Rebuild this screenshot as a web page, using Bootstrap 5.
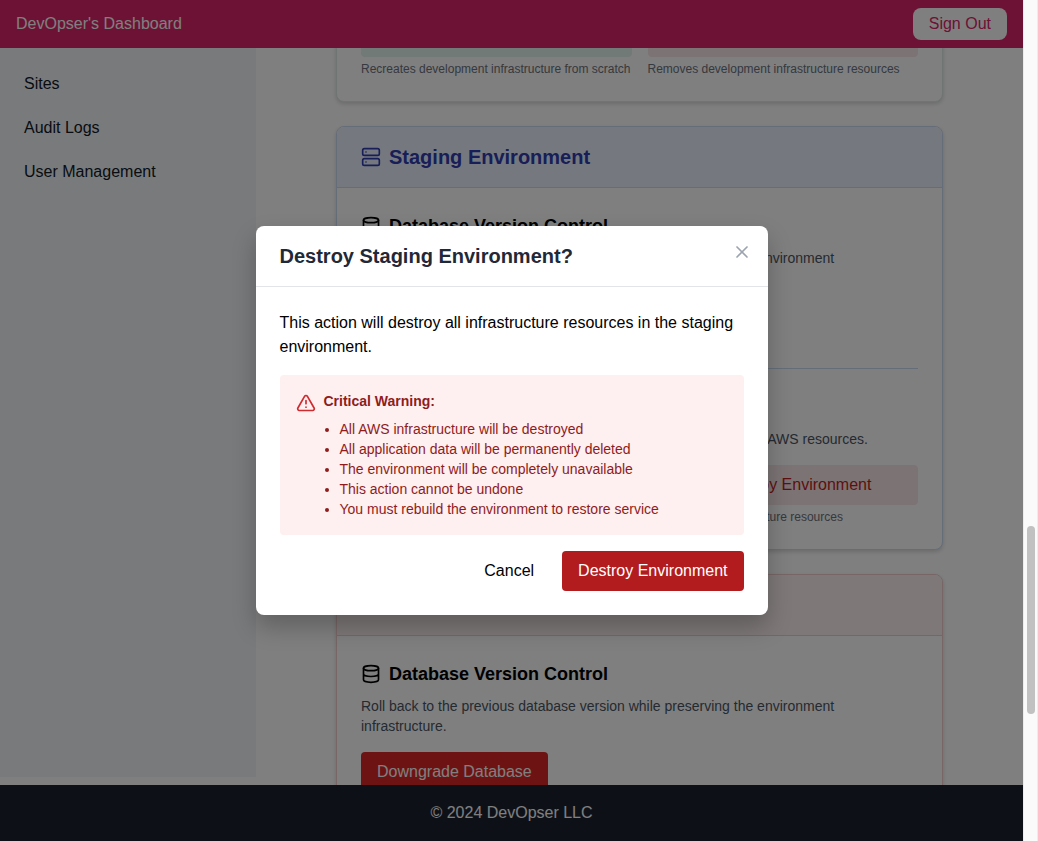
<!DOCTYPE html>
<html lang="en">
<head>
<meta charset="utf-8">
<meta name="viewport" content="width=device-width, initial-scale=1">
<title>DevOpser's Dashboard</title>
<link href="https://cdn.jsdelivr.net/npm/bootstrap@5.3.0/dist/css/bootstrap.min.css" rel="stylesheet">
<style>
  body { font-family: "Liberation Sans", Arial, sans-serif; font-size: 16px; line-height: 24px; color: #000; }
  svg { flex: none; fill: none; stroke: currentColor; stroke-width: 2; stroke-linecap: round; stroke-linejoin: round; }
  .topbar { background: #db2468; height: 48px; }
  .brand-link { color: #fff; text-decoration: none; }
  .btn { --bs-btn-color: #000; --bs-btn-padding-x: 16px; --bs-btn-padding-y: 8px; --bs-btn-border-width: 0; --bs-btn-border-radius: 4px; --bs-btn-line-height: 24px; }
  .btn-signout { --bs-btn-padding-y: 4px; --bs-btn-border-radius: 8px; background: #fff; color: #db2468; }
  .sidebar { width: 256px; background: #f3f5f8; padding: 16px 8px; margin-bottom: 8px; flex: none; }
  .sidebar .nav-link { color: #111827; padding: 8px 16px; }
  .content-area { padding: 0 80px; }
  .scrolled { margin-top: -56px; }
  .env { --edge: #cbdaf3; --tint: #ebf3ff; border: 1px solid var(--edge); border-radius: 8px; background: #fff; box-shadow: 0 2px 4px rgba(0,0,0,.16); margin-bottom: 24px; }
  .env-dev { --edge: #dcebe6; --tint: #f0fdf7; }
  .env-prod { --edge: #f0cccc; --tint: #fdf0f0; }
  .env-head { background: var(--tint); border-bottom: 1px solid var(--edge); border-radius: 7px 7px 0 0; padding: 16px 24px; }
  .env-title, .dialog-title { font-size: 20px; line-height: 28px; font-weight: 700; margin: 0; }
  .env-title { color: #303cae; }
  .env-prod .env-title { color: #9b1c1c; }
  .env-body { padding: 24px; }
  .section-title { font-size: 18px; line-height: 28px; font-weight: 700; margin: 0 0 8px; }
  .note { font-size: 14px; line-height: 20px; color: #4b5563; margin: 0 0 16px; }
  .hint { font-size: 12px; line-height: 16px; color: #6b7280; margin: 4px 0 0; }
  .split { border-top: 1px solid var(--edge); margin-top: 24px; padding-top: 24px; }
  .btn-soft-green { background: #e3f4ec; color: #046c4e; }
  .btn-soft-red { background: #f9e8e8; color: #c01e22; }
  .btn-strong { background: #dc2626; color: #fff; }
  .footer-bar { background: #1b222f; color: #fff; padding: 16px; }
  .shade { background: rgba(0,0,0,.5); }
  .dialog { width: 512px; background: #fff; border-radius: 8px; box-shadow: 0 12px 24px rgba(0,0,0,.24); }
  .dialog-head { padding: 16px 24px; border-bottom: 1px solid #e2e4e8; }
  .dialog-title { color: #1f2937; }
  .btn-x { top: 16px; right: 16px; color: #9ca3af; }
  .dialog-body { padding: 24px; }
  .warning { background: #feeff0; color: #8e1c1c; border-radius: 4px; padding: 16px; font-size: 14px; line-height: 20px; }
  .warning svg { color: #cf2a2e; margin-top: 2px; }
  .warning h3 { font-size: 14px; line-height: 20px; font-weight: 700; margin: 0 0 8px; }
  .warning ul { padding-left: 16px; }
  .dialog-actions { gap: 12px; }
  .btn-destroy { background: #b31c1e; color: #fff; }
  .scroll-track { width: 15px; flex: none; background: #fafafa; border-right: 1px solid #ececec; border-left: 1px solid #ececec; padding: 0 2px 0 3px; }
  .scroll-thumb { height: 188px; width: 8px; border-radius: 4px; background: #c1c1c1; }
  .scroll-track::before { content: ""; flex: 526 1 0; }
  .scroll-track::after { content: ""; flex: 127 1 0; }
</style>
</head>
<body class="d-flex vh-100 overflow-hidden">
<svg width="0" height="0" class="position-absolute" aria-hidden="true">
  <symbol id="server" viewBox="0 0 24 24"><rect x="2" y="2" width="20" height="8" rx="2"/><rect x="2" y="14" width="20" height="8" rx="2"/><path d="M6 6h.01M6 18h.01"/></symbol>
  <symbol id="database" viewBox="0 0 24 24"><ellipse cx="12" cy="5" rx="9" ry="3"/><path d="M3 5v14a9 3 0 0 0 18 0V5M3 12a9 3 0 0 0 18 0"/></symbol>
  <symbol id="refresh" viewBox="0 0 24 24"><path d="M3 12a9 9 0 0 1 15-6.700L21 8M21 3v5h-5M21 12a9 9 0 0 1-15 6.700L3 16M3 21v-5h5"/></symbol>
  <symbol id="trash" viewBox="0 0 24 24"><path d="M3 6h18M19 6v14a2 2 0 0 1-2 2H7a2 2 0 0 1-2-2V6M8 6V4a2 2 0 0 1 2-2h4a2 2 0 0 1 2 2v2M10 11v6M14 11v6"/></symbol>
</svg>

<div class="position-relative d-flex flex-column flex-grow-1 overflow-hidden">
  <header class="topbar d-flex align-items-center justify-content-between px-3 flex-shrink-0">
    <a href="#" class="brand-link">DevOpser's Dashboard</a>
    <button type="button" class="btn btn-signout">Sign Out</button>
  </header>

  <div class="d-flex flex-grow-1 overflow-hidden">
    <nav class="sidebar nav flex-column flex-nowrap gap-1">
      <a class="nav-link" href="#">Sites</a>
      <a class="nav-link" href="#">Audit Logs</a>
      <a class="nav-link" href="#">User Management</a>
    </nav>

    <main class="content-area flex-grow-1 overflow-hidden">
      <div class="scrolled">
        <section class="env env-dev">
          <div class="env-body">
            <div class="row gx-3">
              <div class="col-6"><button type="button" class="btn btn-soft-green w-100 d-flex align-items-center justify-content-center gap-2"><svg width="20" height="20"><use href="#refresh"/></svg>Rebuild Environment</button><p class="hint">Recreates development infrastructure from scratch</p></div>
              <div class="col-6"><button type="button" class="btn btn-soft-red w-100 d-flex align-items-center justify-content-center gap-2"><svg width="20" height="20"><use href="#trash"/></svg>Destroy Environment</button><p class="hint">Removes development infrastructure resources</p></div>
            </div>
          </div>
        </section>

        <section class="env">
          <div class="env-head"><h2 class="env-title d-flex align-items-center gap-2"><svg width="20" height="20"><use href="#server"/></svg>Staging Environment</h2></div>
          <div class="env-body">
            <h3 class="section-title d-flex align-items-center gap-2"><svg width="20" height="20"><use href="#database"/></svg>Database Version Control</h3>
            <p class="note">Roll back to the previous database version while preserving the environment infrastructure.</p>
            <button type="button" class="btn btn-strong">Downgrade Database</button>
            <div class="split">
              <h3 class="section-title d-flex align-items-center gap-2"><svg width="20" height="20"><use href="#server"/></svg>Infrastructure Management</h3>
              <p class="note">Rebuild the environment from scratch or completely delete all the AWS resources.</p>
              <div class="row gx-3">
                <div class="col-6"><button type="button" class="btn btn-soft-green w-100 d-flex align-items-center justify-content-center gap-2"><svg width="20" height="20"><use href="#refresh"/></svg>Rebuild Environment</button><p class="hint">Recreates infrastructure from scratch</p></div>
                <div class="col-6"><button type="button" class="btn btn-soft-red w-100 d-flex align-items-center justify-content-center gap-2"><svg width="20" height="20"><use href="#trash"/></svg>Destroy Environment</button><p class="hint">Removes all infrastructure resources</p></div>
              </div>
            </div>
          </div>
        </section>

        <section class="env env-prod">
          <div class="env-head"><h2 class="env-title d-flex align-items-center gap-2"><svg width="20" height="20"><use href="#server"/></svg>Production Environment</h2></div>
          <div class="env-body">
            <h3 class="section-title d-flex align-items-center gap-2"><svg width="20" height="20"><use href="#database"/></svg>Database Version Control</h3>
            <p class="note">Roll back to the previous database version while preserving the environment infrastructure.</p>
            <button type="button" class="btn btn-strong">Downgrade Database</button>
          </div>
        </section>
      </div>
    </main>
  </div>

  <footer class="footer-bar text-center flex-shrink-0">© 2024 DevOpser LLC</footer>

  <div class="shade position-absolute top-0 start-0 w-100 h-100 d-flex align-items-center justify-content-center">
    <div class="dialog position-relative mw-100" role="dialog" aria-modal="true" aria-labelledby="dialog-title">
      <div class="dialog-head"><h2 class="dialog-title" id="dialog-title">Destroy Staging Environment?</h2></div>
      <button type="button" class="btn btn-x position-absolute p-0 d-flex" aria-label="Close"><svg width="20" height="20" viewBox="0 0 24 24"><path d="M18 6 6 18M6 6l12 12"/></svg></button>
      <div class="dialog-body">
        <p class="mb-3">This action will destroy all infrastructure resources in the staging environment.</p>
        <div class="warning d-flex gap-2 mb-3">
          <svg width="20" height="20" viewBox="0 0 24 24"><path d="m21.730 18-8-14a2 2 0 0 0-3.480 0l-8 14A2 2 0 0 0 4 21h16a2 2 0 0 0 1.730-3ZM12 9v4M12 17h.01"/></svg>
          <div>
            <h3>Critical Warning:</h3>
            <ul class="mb-0">
              <li>All AWS infrastructure will be destroyed</li>
              <li>All application data will be permanently deleted</li>
              <li>The environment will be completely unavailable</li>
              <li>This action cannot be undone</li>
              <li>You must rebuild the environment to restore service</li>
            </ul>
          </div>
        </div>
        <div class="dialog-actions d-flex justify-content-end">
          <button type="button" class="btn">Cancel</button>
          <button type="button" class="btn btn-destroy">Destroy Environment</button>
        </div>
      </div>
    </div>
  </div>
</div>

<div class="scroll-track d-flex flex-column align-items-center" aria-hidden="true"><div class="scroll-thumb"></div></div>
<script src="https://cdn.jsdelivr.net/npm/bootstrap@5.3.0/dist/js/bootstrap.bundle.min.js"></script>
</body>
</html>
